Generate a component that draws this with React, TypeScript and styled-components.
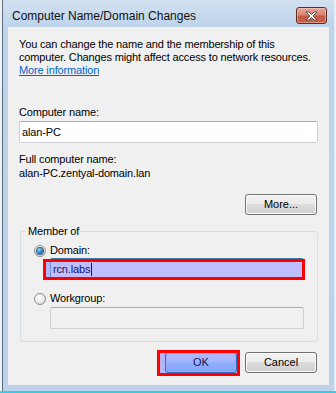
import React from 'react';
import styled, { createGlobalStyle } from 'styled-components';

const Global = createGlobalStyle`
  html, body { margin: 0; padding: 0; }
  body {
    background: #eef2f6;
    font-family: "Liberation Sans", Arial, sans-serif;
    color: #000;
  }
  #root { width: 336px; height: 393px; overflow: hidden; }
`;

const Screen = styled.div`
  width: 336px;
  height: 393px;
  display: flex;
  flex-direction: column;
  background: #eef2f6;
`;

const Window = styled.div`
  margin-left: 2px;
  width: 333px;
  height: 391px;
  box-sizing: border-box;
  border-left: 1px solid #5f6c7a;
  border-right: 1px solid #e2ebf5;
  background: linear-gradient(to bottom, #d2e1f1 0px, #bed4eb 27px, #bcd2ea 100%);
  display: flex;
  flex-direction: column;
  padding: 0 5px 6px 5px;
`;

const Strip = styled.div`
  height: 2px;
  background: #33cde8;
`;

const TitleBar = styled.div`
  height: 27px;
  flex: none;
  display: flex;
  justify-content: space-between;
  align-items: flex-start;
  padding: 0 2px 0 4px;
`;

const TitleText = styled.div`
  margin-top: 9px;
  font-size: 12px;
  line-height: 15px;
  color: #111;
`;

const CloseButton = styled.div`
  margin-top: 7px;
  width: 31px;
  height: 17px;
  box-sizing: border-box;
  border: 1px solid #5e2a24;
  border-radius: 3px;
  background: linear-gradient(to bottom, #e9a99b 0%, #d98372 45%, #c75a46 55%, #c8604c 100%);
  box-shadow: inset 0 0 0 1px rgba(255, 210, 200, 0.45);
  display: flex;
  align-items: center;
  justify-content: center;
`;

const Client = styled.div`
  flex: 1;
  background: #f0f0f0;
  padding: 11px 11px 0 11px;
  display: flex;
  flex-direction: column;
  font-size: 11px;
  line-height: 13px;
  letter-spacing: -0.15px;
`;

const Intro = styled.div`
  line-height: 13px;
`;

const Link = styled.span`
  color: #0066cc;
  text-decoration: underline;
`;

const Label = styled.div<{ $top: number }>`
  margin-top: ${(p) => p.$top}px;
  line-height: 13px;
`;

const TextBox = styled.div<{ $disabled?: boolean; $focused?: boolean; $indent?: number; $top?: number }>`
  box-sizing: border-box;
  height: 22px;
  margin-top: ${(p) => p.$top ?? 0}px;
  margin-left: ${(p) => p.$indent ?? 0}px;
  border: 1px solid ${(p) => (p.$focused ? '#7eb4ea' : '#cdd1d7')};
  border-top-color: ${(p) => (p.$focused ? '#3d7bad' : '#abadb3')};
  border-radius: 2px;
  background: ${(p) => (p.$disabled ? '#f0f0f0' : '#ffffff')};
  padding: 0 2px;
  line-height: 20px;
  display: flex;
  align-items: center;
  white-space: nowrap;
`;

const Caret = styled.span`
  display: inline-block;
  width: 1px;
  height: 13px;
  background: #000;
  margin-left: 1px;
`;

const ButtonRow = styled.div<{ $top: number }>`
  margin-top: ${(p) => p.$top}px;
  display: flex;
  justify-content: flex-end;
  gap: 8px;
  padding-right: 1px;
`;

const Button = styled.div<{ $default?: boolean }>`
  box-sizing: border-box;
  width: 72px;
  height: 21px;
  border: 1px solid ${(p) => (p.$default ? '#3c7fb1' : '#707070')};
  border-radius: 3px;
  background: ${(p) =>
    p.$default
      ? 'linear-gradient(to bottom, #eaf6fd 0%, #d9f0fc 50%, #bee6fd 50%, #a7d9f5 100%)'
      : 'linear-gradient(to bottom, #f2f2f2 0%, #ebebeb 50%, #dddddd 50%, #cfcfcf 100%)'};
  box-shadow: inset 0 0 0 1px ${(p) => (p.$default ? '#c0e6fb' : '#fcfcfc')};
  display: flex;
  align-items: center;
  justify-content: center;
  font-size: 11px;
  letter-spacing: 0;
`;

const Highlight = styled.div<{ $indent?: number; $top?: number }>`
  position: relative;
  margin-top: ${(p) => p.$top ?? 0}px;
  margin-left: ${(p) => p.$indent ?? 0}px;
`;

const Mark = styled.div<{ $t: number; $r: number; $b: number; $l: number }>`
  position: absolute;
  top: ${(p) => p.$t}px;
  right: ${(p) => p.$r}px;
  bottom: ${(p) => p.$b}px;
  left: ${(p) => p.$l}px;
  border: 3px solid #ff0000;
  background: rgba(60, 60, 255, 0.33);
  pointer-events: none;
`;

const GroupBox = styled.div`
  margin-top: 16px;
  margin-left: 1px;
  border: 1px solid #d5dfe5;
  border-radius: 3px;
  padding: 0 13px 12px 13px;
  display: flex;
  flex-direction: column;
`;

const Legend = styled.div`
  margin-top: -7px;
  margin-left: -7px;
  padding: 0 1px;
  width: fit-content;
  background: #f0f0f0;
  line-height: 13px;
`;

const RadioRow = styled.div<{ $top: number }>`
  margin-top: ${(p) => p.$top}px;
  display: flex;
  align-items: center;
  gap: 4px;
  line-height: 13px;
`;

const Radio = styled.span<{ $checked?: boolean }>`
  box-sizing: border-box;
  width: 12px;
  height: 12px;
  border-radius: 50%;
  border: 1px solid #8e8f8f;
  background: radial-gradient(circle at 40% 35%, #ffffff 0%, #eeeeee 45%, #cfcfcf 100%);
  display: flex;
  align-items: center;
  justify-content: center;
  flex: none;
`;

const RadioDot = styled.span`
  width: 6px;
  height: 6px;
  border-radius: 50%;
  background: radial-gradient(circle at 35% 30%, #9ad8f7 0%, #2e8ccf 45%, #0c3f6b 100%);
  box-shadow: 0 0 0 1px #3a5f7d;
`;

export default function App() {
  return (
    <>
      <Global />
      <Screen>
        <Window>
          <TitleBar>
            <TitleText>Computer Name/Domain Changes</TitleText>
            <CloseButton>
              <svg width="13" height="10" viewBox="0 0 13 10">
                <path
                  d="M1 1 H4 L6.5 3.5 L9 1 H12 L8 5 L12 9 H9 L6.5 6.5 L4 9 H1 L5 5 Z"
                  fill="#ffffff"
                  stroke="#4a4a4a"
                  strokeWidth="0.9"
                  strokeLinejoin="round"
                />
              </svg>
            </CloseButton>
          </TitleBar>
          <Client>
            <Intro>
              You can change the name and the membership of this
              <br />
              computer. Changes might affect access to network resources.
              <br />
              <Link>More information</Link>
            </Intro>
            <Label $top={29}>Computer name:</Label>
            <TextBox $top={2}>alan-PC</TextBox>
            <Label $top={10}>Full computer name:</Label>
            <Label $top={1}>alan-PC.zentyal-domain.lan</Label>
            <ButtonRow $top={14}>
              <Button>More...</Button>
            </ButtonRow>
            <GroupBox>
              <Legend>Member of</Legend>
              <RadioRow $top={6}>
                <Radio $checked>
                  <RadioDot />
                </Radio>
                <span>Domain:</span>
              </RadioRow>
              <Highlight $indent={16} $top={1}>
                <TextBox $focused>
                  rcn.labs
                  <Caret />
                </TextBox>
                <Mark $t={1} $r={-1} $b={0} $l={-7} />
              </Highlight>
              <RadioRow $top={12}>
                <Radio />
                <span>Workgroup:</span>
              </RadioRow>
              <TextBox $disabled $indent={16} $top={2} />
            </GroupBox>
            <ButtonRow $top={10}>
              <Highlight>
                <Button $default>OK</Button>
                <Mark $t={-2} $r={-3} $b={-3} $l={-8} />
              </Highlight>
              <Button>Cancel</Button>
            </ButtonRow>
          </Client>
        </Window>
        <Strip />
      </Screen>
    </>
  );
}
